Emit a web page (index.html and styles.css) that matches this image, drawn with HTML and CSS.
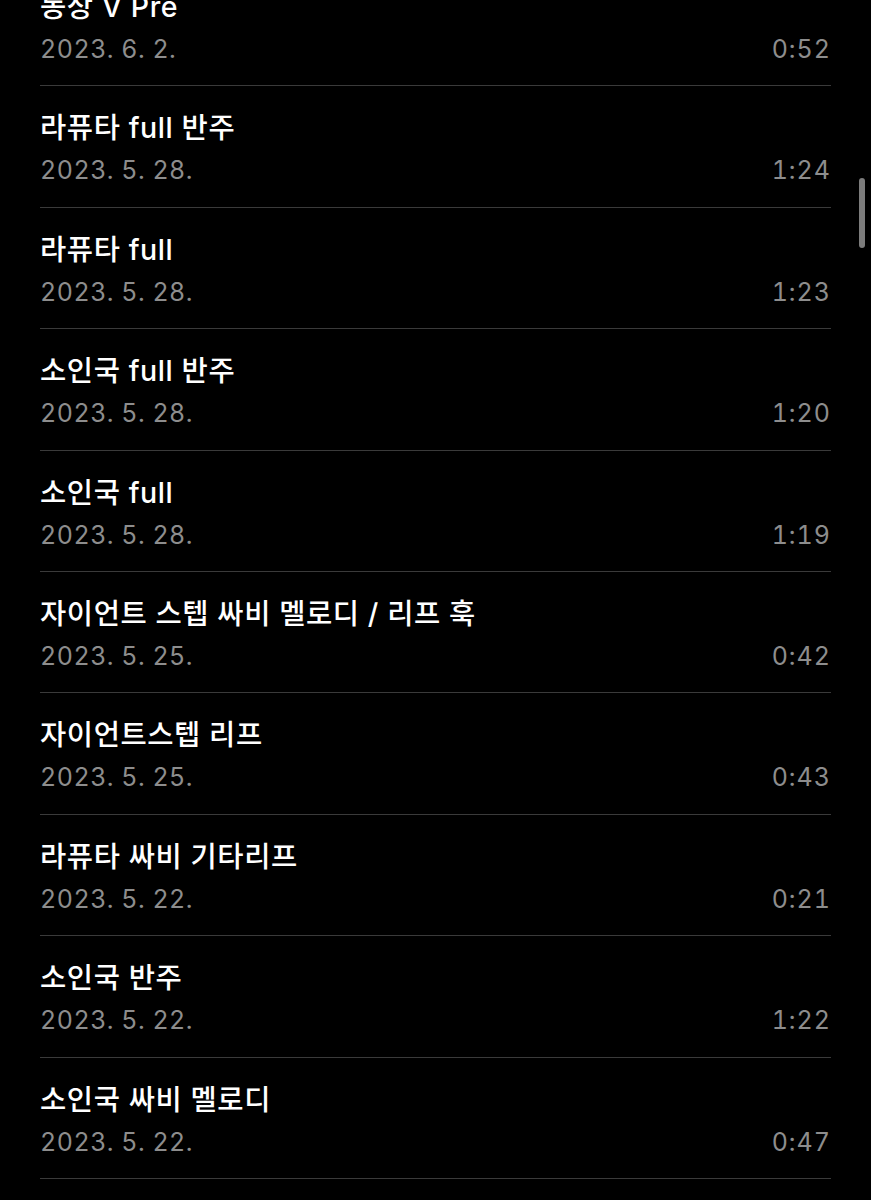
FILE: index.html
```html
<!DOCTYPE html>
<html lang="ko">
<head>
    <meta charset="UTF-8">
    <meta name="viewport" content="width=device-width, initial-scale=1.0">
    <title>음성 메모</title>
    <link rel="stylesheet" href="styles.css">
</head>
<body>

    <div class="lista">
        <div class="fila">
            <div class="titulo">동상 V Pre</div>
            <div class="info"><span class="fecha">2023. 6. 2.</span><span>0:52</span></div>
        </div>
        <div class="fila">
            <div class="titulo">라퓨타 full 반주</div>
            <div class="info"><span class="fecha">2023. 5. 28.</span><span>1:24</span></div>
        </div>
        <div class="fila">
            <div class="titulo">라퓨타 full</div>
            <div class="info"><span class="fecha">2023. 5. 28.</span><span>1:23</span></div>
        </div>
        <div class="fila">
            <div class="titulo">소인국 full 반주</div>
            <div class="info"><span class="fecha">2023. 5. 28.</span><span>1:20</span></div>
        </div>
        <div class="fila">
            <div class="titulo">소인국 full</div>
            <div class="info"><span class="fecha">2023. 5. 28.</span><span>1:19</span></div>
        </div>
        <div class="fila">
            <div class="titulo">자이언트 스텝 싸비 멜로디 / 리프 훅</div>
            <div class="info"><span class="fecha">2023. 5. 25.</span><span>0:42</span></div>
        </div>
        <div class="fila">
            <div class="titulo">자이언트스텝 리프</div>
            <div class="info"><span class="fecha">2023. 5. 25.</span><span>0:43</span></div>
        </div>
        <div class="fila">
            <div class="titulo">라퓨타 싸비 기타리프</div>
            <div class="info"><span class="fecha">2023. 5. 22.</span><span>0:21</span></div>
        </div>
        <div class="fila">
            <div class="titulo">소인국 반주</div>
            <div class="info"><span class="fecha">2023. 5. 22.</span><span>1:22</span></div>
        </div>
        <div class="fila">
            <div class="titulo">소인국 싸비 멜로디</div>
            <div class="info"><span class="fecha">2023. 5. 22.</span><span>0:47</span></div>
        </div>
    </div>

    <div class="barra"></div>

</body>
</html>
```

FILE: styles.css
```css
body {
    font-family: Inter, "Noto Sans CJK KR", sans-serif;
    background-color: #000;
    color: #fff;
    margin: 0;
    height: 1200px;
    overflow: hidden;
}
.lista {
    margin-top: -35px;
    padding: 0 40px;
}
.fila {
    height: 120.4px;
    border-bottom: 1px solid #3a3a3a;
    display: flex;
    flex-direction: column;
}
.titulo {
    font-size: 28.5px;
    font-weight: 500;
    letter-spacing: 0.6px;
    line-height: 40px;
    margin-top: 22px;
    white-space: nowrap;
}
.info {
    display: flex;
    justify-content: space-between;
    font-size: 25px;
    letter-spacing: 1px;
    font-variant-numeric: tabular-nums;
    line-height: 44px;
    color: #8d8d8d;
}
.fecha {
    letter-spacing: 0.5px;
}
.barra {
    position: fixed;
    top: 178px;
    right: 6px;
    width: 6px;
    height: 70px;
    border-radius: 3px;
    background-color: #7c7c7c;
}
```
